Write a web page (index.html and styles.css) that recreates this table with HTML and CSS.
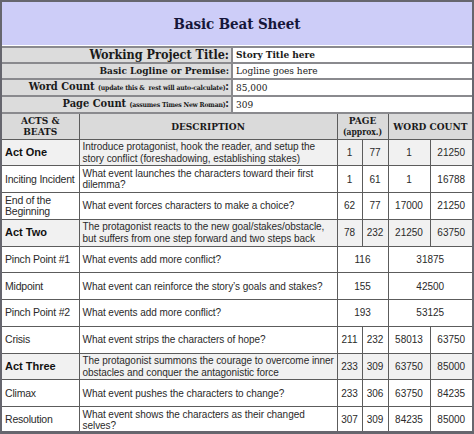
FILE: index.html
```html
<!DOCTYPE html>
<html>
<head>
<meta charset="utf-8">
<link rel="stylesheet" href="styles.css">
</head>
<body>
<div class="sheet">
  <div class="title">Basic Beat Sheet</div>
  <table class="info">
    <colgroup><col class="c-label"><col class="c-value"></colgroup>
    <tr class="r1"><th>Working Project Title:</th><td class="v-bold">Story Title here</td></tr>
    <tr class="r2"><th>Basic Logline or Premise:</th><td>Logline goes here</td></tr>
    <tr class="r3"><th>Word Count <small>(update this &amp;&nbsp; rest will auto-calculate)</small>:</th><td>85,000</td></tr>
    <tr class="r4"><th>Page Count <small>(assumes Times New Roman)</small>:</th><td>309</td></tr>
  </table>
  <table class="beats">
    <colgroup>
      <col class="c-act"><col class="c-desc"><col class="c-p1"><col class="c-p2"><col class="c-w1"><col class="c-w2">
    </colgroup>
    <tr class="head">
      <th>ACTS &amp;<br>BEATS</th>
      <th>DESCRIPTION</th>
      <th colspan="2">PAGE<br><span class="sub">(approx.)</span></th>
      <th colspan="2">WORD COUNT</th>
    </tr>
    <tr class="act">
      <td class="name">Act One</td>
      <td class="desc">Introduce protagonist, hook the reader, and setup the story conflict (foreshadowing, establishing stakes)</td>
      <td>1</td><td>77</td><td>1</td><td>21250</td>
    </tr>
    <tr>
      <td class="name">Inciting Incident</td>
      <td class="desc">What event launches the characters toward their first dilemma?</td>
      <td>1</td><td>61</td><td>1</td><td>16788</td>
    </tr>
    <tr>
      <td class="name">End of the Beginning</td>
      <td class="desc">What event forces characters to make a choice?</td>
      <td>62</td><td>77</td><td>17000</td><td>21250</td>
    </tr>
    <tr class="act">
      <td class="name">Act Two</td>
      <td class="desc">The protagonist reacts to the new goal/stakes/obstacle, but suffers from one step forward and two steps back</td>
      <td>78</td><td>232</td><td>21250</td><td>63750</td>
    </tr>
    <tr>
      <td class="name">Pinch Point #1</td>
      <td class="desc">What events add more conflict?</td>
      <td colspan="2">116</td><td colspan="2">31875</td>
    </tr>
    <tr>
      <td class="name">Midpoint</td>
      <td class="desc">What event can reinforce the story’s goals and stakes?</td>
      <td colspan="2">155</td><td colspan="2">42500</td>
    </tr>
    <tr>
      <td class="name">Pinch Point #2</td>
      <td class="desc">What events add more conflict?</td>
      <td colspan="2">193</td><td colspan="2">53125</td>
    </tr>
    <tr>
      <td class="name">Crisis</td>
      <td class="desc">What event strips the characters of hope?</td>
      <td>211</td><td>232</td><td>58013</td><td>63750</td>
    </tr>
    <tr class="act">
      <td class="name">Act Three</td>
      <td class="desc">The protagonist summons the courage to overcome inner obstacles and conquer the antagonistic force</td>
      <td>233</td><td>309</td><td>63750</td><td>85000</td>
    </tr>
    <tr>
      <td class="name">Climax</td>
      <td class="desc">What event pushes the characters to change?</td>
      <td>233</td><td>306</td><td>63750</td><td>84235</td>
    </tr>
    <tr>
      <td class="name">Resolution</td>
      <td class="desc">What event shows the characters as their changed selves?</td>
      <td>307</td><td>309</td><td>84235</td><td>85000</td>
    </tr>
  </table>
</div>
</body>
</html>
```

FILE: styles.css
```css
html, body {
  margin: 0;
  padding: 0;
  background: #ffffff;
}

.sheet {
  width: 474px;
  height: 434px;
  box-sizing: border-box;
  border: 2px solid #66666e;
  border-bottom-width: 3px;
  background: #ffffff;
  display: flex;
  flex-direction: column;
  overflow: hidden;
}

.title {
  height: 43px;
  flex: none;
  background: #cdcdf8;
  border-bottom: 1px solid #ffffff;
  display: flex;
  align-items: center;
  justify-content: center;
  font-family: "DejaVu Serif Condensed", "DejaVu Serif", "Liberation Serif", serif;
  font-weight: bold;
  font-size: 15px;
  color: #16163a;
  letter-spacing: -0.1px;
}

table {
  border-collapse: collapse;
  table-layout: fixed;
  width: 470px;
}

.info {
  flex: none;
  border-top: 2px solid #8a8a8e;
}

.info .c-label { width: 230px; }
.info .c-value { width: 240px; }

.info th,
.info td {
  border-bottom: 2px solid #8a8a8e;
  padding: 0 3px;
  height: 14px;
  line-height: 14px;
  white-space: nowrap;
  overflow: hidden;
  font-family: "DejaVu Serif Condensed", "DejaVu Serif", "Liberation Serif", serif;
  color: #1a1a1a;
}

.info th {
  background: #dcdcdc;
  text-align: right;
  border-right: 2px solid #8a8a8e;
  font-weight: bold;
  font-size: 10px;
  padding-right: 2px;
}

.info .r1 th { font-size: 12.5px; }
.info .r3 th, .info .r4 th { font-size: 11px; }

.info th small {
  font-size: 6.8px;
  letter-spacing: -0.2px;
}

.info td {
  text-align: left;
  font-size: 10px;
  background: #ffffff;
}

.info td.v-bold {
  font-weight: bold;
}

.beats {
  flex: none;
  height: 319px;
}

.beats .c-act { width: 77px; }
.beats .c-desc { width: 258px; }
.beats .c-p1 { width: 25px; }
.beats .c-p2 { width: 26px; }
.beats .c-w1 { width: 42px; }
.beats .c-w2 { width: 42px; }

.beats th,
.beats td {
  border: 1px solid #5c5c5c;
  font-family: "Liberation Sans", Arial, sans-serif;
  font-size: 10px;
  color: #2a2a2a;
  text-align: center;
  vertical-align: middle;
  line-height: 11.5px;
  padding: 0 1px;
  height: 25px;
}

.beats tr:first-child th { border-top: none; }
.beats th:first-child, .beats td:first-child { border-left: none; }
.beats th:last-child, .beats td:last-child { border-right: none; }
.beats tr:last-child td { border-bottom: none; }

.beats .head th {
  background: #dadada;
  font-family: "DejaVu Serif Condensed", "DejaVu Serif", "Liberation Serif", serif;
  font-weight: bold;
  font-size: 10px;
  line-height: 11px;
  color: #1a1a1a;
  height: 24px;
}

.beats .head .sub {
  font-size: 8.5px;
}

.beats td.name {
  text-align: left;
  padding-left: 3px;
  font-size: 10.5px;
  letter-spacing: -0.2px;
}

.beats td.desc {
  text-align: left;
  padding-left: 3px;
  letter-spacing: -0.05px;
}

.beats tr.act td {
  background: #f1f1f1;
}

.beats tr.act td.name {
  font-weight: bold;
  font-size: 11px;
  letter-spacing: 0;
  color: #111111;
}
```
